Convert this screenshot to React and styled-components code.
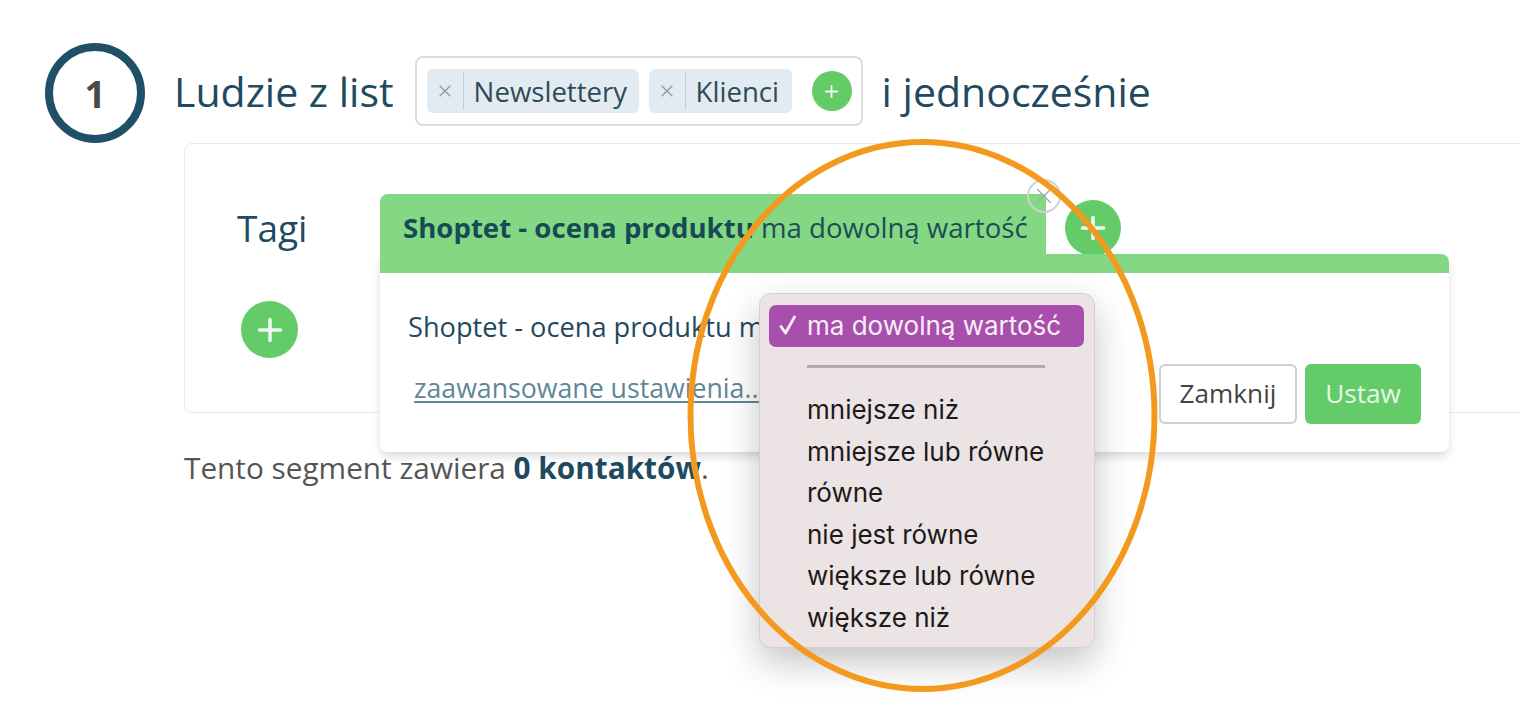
import React from "react";
import styled, { createGlobalStyle } from "styled-components";

const Global = createGlobalStyle`
  html, body { margin: 0; padding: 0; background: #fff; }
  body { font-family: "Open Sans", "Liberation Sans", sans-serif; }
`;

const Page = styled.div`
  position: relative;
  width: 1520px;
  height: 704px;
  overflow: hidden;
  background: #fff;
  padding: 43px 0 0 45px;
  box-sizing: border-box;
`;

const Header = styled.div`
  display: flex;
  align-items: center;
  height: 100px;
`;

const StepCircle = styled.div`
  width: 100px;
  height: 100px;
  box-sizing: border-box;
  border: 8px solid #1f5068;
  border-radius: 50%;
  display: flex;
  align-items: center;
  justify-content: center;
  font-size: 37px;
  font-weight: 700;
  color: #4a4a4a;
`;

const Heading = styled.span`
  font-size: 41px;
  line-height: 54px;
  color: #1f4a5f;
  margin: -4px 0 0 ${(p) => p.$left}px;
  white-space: nowrap;
`;

const TagBox = styled.div`
  box-sizing: border-box;
  width: 448px;
  height: 70px;
  margin-left: 21px;
  border: 2px solid #dcdcdc;
  border-radius: 8px;
  padding: 0 10px;
  display: flex;
  align-items: center;
  gap: 10px;
  position: relative;
  top: -2px;
`;

const Tag = styled.div`
  height: 44px;
  width: ${(p) => p.$width}px;
  background: #e3ebf2;
  border-radius: 6px;
  display: flex;
  align-items: center;
  box-sizing: border-box;
  flex: none;
`;

const TagRemove = styled.span`
  width: 37px;
  height: 38px;
  box-sizing: border-box;
  border-right: 1px solid #c3ccd4;
  display: flex;
  align-items: center;
  justify-content: center;
  color: #8d9aa6;
  flex: none;
`;

const TagLabel = styled.span`
  font-size: 27.6px;
  color: #2f4a58;
  padding-left: 10px;
  white-space: nowrap;
  margin-top: -1px;
`;

const RoundAdd = styled.div`
  width: ${(p) => p.$size}px;
  height: ${(p) => p.$size}px;
  border-radius: 50%;
  background: #63cc68;
  display: flex;
  align-items: center;
  justify-content: center;
  flex: none;
  margin-left: ${(p) => p.$left || 0}px;
  margin-top: ${(p) => p.$top || 0}px;
`;

const Card = styled.div`
  position: relative;
  box-sizing: border-box;
  width: 1400px;
  height: 270px;
  margin-left: 139px;
  border: 1px solid #eaeaea;
  border-radius: 8px;
  padding: 58px 0 0 52px;
`;

const CardTitle = styled.div`
  font-size: 37px;
  line-height: 52px;
  color: #1f4a5f;
`;

const Popover = styled.div`
  position: absolute;
  left: 195px;
  top: 50px;
  width: 1069px;
  height: 258px;
  display: flex;
  flex-direction: column;
`;

const TabRow = styled.div`
  display: flex;
  height: 60px;
  flex: none;
`;

const Tab = styled.div`
  position: relative;
  width: 666px;
  box-sizing: border-box;
  background: #84d883;
  border-radius: 8px 0 0 0;
  padding: 13px 0 0 23px;
  font-size: 27.6px;
  line-height: 40px;
  color: #1d4c58;
  white-space: nowrap;
  b { font-weight: 700; color: #174a55; }
`;

const TabClose = styled.div`
  position: absolute;
  right: -15px;
  top: -15px;
  width: 34px;
  height: 34px;
  box-sizing: border-box;
  border: 2px solid #cfd2d2;
  border-radius: 50%;
  display: flex;
  align-items: center;
  justify-content: center;
  color: #a3abaa;
`;

const PopBody = styled.div`
  flex: 1;
  background: #fff;
  border-radius: 0 8px 8px 8px;
  box-shadow: 0 5px 10px -1px rgba(0, 0, 0, 0.16);
  display: flex;
  flex-direction: column;
  overflow: hidden;
`;

const GreenBar = styled.div`
  height: 19px;
  background: #84d883;
  flex: none;
`;

const PopContent = styled.div`
  position: relative;
  flex: 1;
  padding: 34px 28px 0 28px;
`;

const Sentence = styled.div`
  font-size: 27.2px;
  line-height: 40px;
  color: #1f4a5f;
  white-space: nowrap;
`;

const AdvancedLink = styled.a`
  display: inline-block;
  font-size: 26.7px;
  line-height: 36px;
  color: #5f8797;
  text-decoration: underline;
  text-underline-offset: 3px;
  text-decoration-thickness: 2px;
  margin: 23px 0 0 6px;
  white-space: nowrap;
`;

const Actions = styled.div`
  position: absolute;
  right: 28px;
  top: 91px;
  display: flex;
  gap: 8px;
`;

const Button = styled.div`
  box-sizing: border-box;
  height: 60px;
  width: ${(p) => p.$width}px;
  border-radius: 6px;
  display: flex;
  align-items: center;
  justify-content: center;
  padding-bottom: 3px;
  font-size: 26.2px;
  color: ${(p) => (p.$primary ? "#e8f8e8" : "#444")};
  background: ${(p) => (p.$primary ? "#63cc68" : "#fff")};
  border: ${(p) => (p.$primary ? "none" : "2px solid #cfcfcf")};
`;

const AddColumn = styled.div`
  margin: 47px 0 0 4px;
`;

const Summary = styled.div`
  margin: 35px 0 0 139px;
  font-size: 29.75px;
  line-height: 40px;
  color: #555;
  white-space: nowrap;
  b { font-weight: 700; color: #1f4a60; }
`;

const NativeMenu = styled.div`
  position: absolute;
  left: 759px;
  top: 293px;
  width: 336px;
  height: 355px;
  box-sizing: border-box;
  background: #ece4e4;
  border: 1px solid #d5cfcf;
  border-radius: 12px;
  box-shadow: 0 14px 36px rgba(0, 0, 0, 0.24);
  padding: 11px 10px 0 9px;
  font-family: Inter, "Liberation Sans", sans-serif;
  font-size: 26px;
  color: #1c1a1a;
`;

const MenuSelected = styled.div`
  height: 42px;
  box-sizing: border-box;
  background: #a84fae;
  border-radius: 7px;
  color: #f8eef8;
  display: flex;
  align-items: center;
  padding: 0 0 2px 9px;
  white-space: nowrap;
  svg { width: 20px; height: 22px; margin-right: 9px; flex: none; }
`;

const MenuSeparator = styled.div`
  height: 3px;
  background: #b5abab;
  margin: 18px 39px 21px 38px;
`;

const MenuItem = styled.div`
  height: 41.6px;
  line-height: 41.6px;
  padding-left: 38px;
  white-space: nowrap;
`;

const Highlight = styled.svg`
  position: absolute;
  left: 680px;
  top: 130px;
  pointer-events: none;
`;

const Plus = ({ size, width = 3 }) => (
  <svg width={size} height={size} viewBox="0 0 24 24" fill="none" stroke="#f1faf1" strokeWidth={width} strokeLinecap="round">
    <path d="M12 3v18M3 12h18" />
  </svg>
);

const Cross = ({ size, width = 1.6 }) => (
  <svg width={size} height={size} viewBox="0 0 24 24" fill="none" stroke="currentColor" strokeWidth={width}>
    <path d="M4 4l16 16M20 4L4 20" />
  </svg>
);

const CheckMark = () => (
  <svg viewBox="0 0 20 22" fill="none" stroke="#f8eef8" strokeWidth="2.8" strokeLinecap="round" strokeLinejoin="round">
    <path d="M3 12.5l4.5 6.5L16.5 3" />
  </svg>
);

export default function App() {
  return (
    <Page>
      <Global />
      <Header>
        <StepCircle>1</StepCircle>
        <Heading $left={29}>Ludzie z list</Heading>
        <TagBox>
          <Tag $width={212}>
            <TagRemove><Cross size={16} width={2} /></TagRemove>
            <TagLabel>Newslettery</TagLabel>
          </Tag>
          <Tag $width={143}>
            <TagRemove><Cross size={16} width={2} /></TagRemove>
            <TagLabel>Klienci</TagLabel>
          </Tag>
          <RoundAdd $size={40} $left={10}><Plus size={15} width={3} /></RoundAdd>
        </TagBox>
        <Heading $left={19}>i jednocześnie</Heading>
      </Header>
      <Card>
        <CardTitle>Tagi</CardTitle>
        <AddColumn>
          <RoundAdd $size={57}><Plus size={28} width={3} /></RoundAdd>
        </AddColumn>
        <Popover>
          <TabRow>
            <Tab>
              <b>Shoptet - ocena produktu</b> ma dowolną wartość
              <TabClose><Cross size={20} /></TabClose>
            </Tab>
            <RoundAdd $size={56} $left={19} $top={6}><Plus size={28} width={3.2} /></RoundAdd>
          </TabRow>
          <PopBody>
            <GreenBar />
            <PopContent>
              <Sentence>Shoptet - ocena produktu ma dowolną wartość</Sentence>
              <AdvancedLink>zaawansowane ustawienia...</AdvancedLink>
              <Actions>
                <Button $width={138}>Zamknij</Button>
                <Button $width={116} $primary>Ustaw</Button>
              </Actions>
            </PopContent>
          </PopBody>
        </Popover>
      </Card>
      <Summary>Tento segment zawiera <b>0 kontaktów</b>.</Summary>
      <NativeMenu>
        <MenuSelected><CheckMark />ma dowolną wartość</MenuSelected>
        <MenuSeparator />
        <MenuItem>mniejsze niż</MenuItem>
        <MenuItem>mniejsze lub równe</MenuItem>
        <MenuItem>równe</MenuItem>
        <MenuItem>nie jest równe</MenuItem>
        <MenuItem>większe lub równe</MenuItem>
        <MenuItem>większe niż</MenuItem>
      </NativeMenu>
      <Highlight width="490" height="570" viewBox="0 0 490 570">
        <ellipse cx="242.5" cy="285.5" rx="232" ry="273.5" fill="none" stroke="#f39a1e" strokeWidth="6" />
      </Highlight>
    </Page>
  );
}
